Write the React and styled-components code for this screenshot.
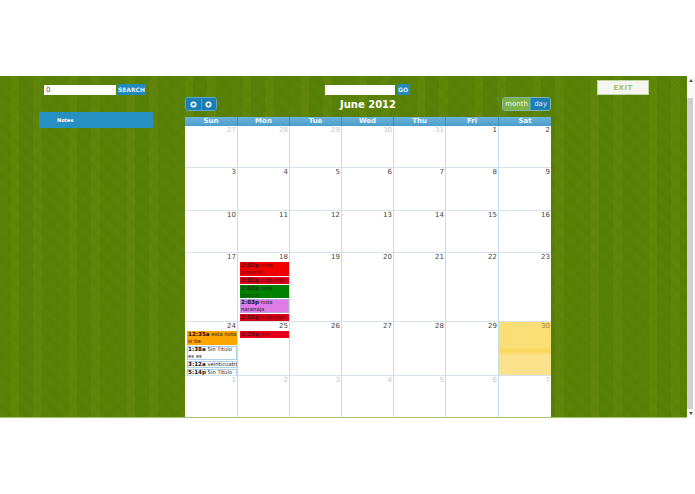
import React from 'react';
import styled, { createGlobalStyle } from 'styled-components';

const GlobalStyle = createGlobalStyle`
  html, body {
    margin: 0;
    padding: 0;
    background: #fff;
    overflow: hidden;
  }
  body {
    font-family: "DejaVu Sans", Verdana, sans-serif;
  }
`;

const Page = styled.div`
  width: 695px;
  height: 494px;
  padding-top: 76px;
  box-sizing: border-box;
`;

const Band = styled.div`
  height: 342px;
  display: flex;
  box-sizing: border-box;
  border-bottom: 1px solid #a3c76a;
  background-color: #598204;
  background-image:
    repeating-linear-gradient(45deg, rgba(255, 255, 255, 0.018) 0 1px, rgba(0, 0, 0, 0.018) 1px 2px),
    repeating-linear-gradient(-45deg, rgba(255, 255, 255, 0.012) 0 1px, rgba(0, 0, 0, 0.012) 1px 2px),
    repeating-linear-gradient(
      90deg,
      #588103 0 11px,
      #5e8605 11px 19px,
      #567f02 19px 33px,
      #5d8505 33px 42px,
      #578002 42px 58px
    );
`;

const Sidebar = styled.div`
  width: 185px;
  flex: none;
  box-sizing: border-box;
  padding: 8px 0 0 39px;
`;

const SearchRow = styled.div`
  display: flex;
  align-items: center;
  gap: ${(p) => p.$gap}px;
  margin-left: ${(p) => p.$indent || 0}px;
  padding-right: ${(p) => (p.$center ? 2 : 0)}px;
  justify-content: ${(p) => (p.$center ? 'center' : 'flex-start')};
  height: 11px;
`;

const TextBox = styled.input`
  width: ${(p) => p.$width}px;
  height: 10px;
  padding: 0 0 0 2px;
  box-sizing: border-box;
  border: 0;
  outline: 0;
  background: #fff;
  color: #555;
  font: 7px "DejaVu Sans", sans-serif;
`;

const BlueButton = styled.button`
  width: ${(p) => p.$width}px;
  height: 11px;
  padding: 0;
  border: 0;
  background: #2389bd;
  color: #dff1fa;
  font: bold 6px "DejaVu Sans", sans-serif;
`;

const MenuItem = styled.div`
  width: 114px;
  height: 16px;
  margin-top: 17px;
  padding-left: 18px;
  box-sizing: border-box;
  background: #2790c3;
  color: #fff;
  font-size: 5px;
  font-weight: bold;
  line-height: 16px;
`;

const Main = styled.div`
  width: 366px;
  flex: none;
  padding-top: 8px;
  display: flex;
  flex-direction: column;
`;

const Toolbar = styled.div`
  display: flex;
  align-items: center;
  height: 14px;
  margin-top: 2px;
`;

const ToolbarSide = styled.div`
  flex: 1;
  display: flex;
  justify-content: ${(p) => (p.$end ? 'flex-end' : 'flex-start')};
`;

const ButtonGroup = styled.div`
  display: flex;
  height: 14px;
  width: ${(p) => p.$width}px;
  box-sizing: border-box;
  border: 1px solid ${(p) => p.$edge || '#5aa7c9'};
  border-radius: 3px;
  overflow: hidden;
`;

const GroupButton = styled.div`
  flex: ${(p) => p.$grow || 1};
  display: flex;
  align-items: center;
  justify-content: center;
  background: ${(p) => (p.$light ? '#7eb148' : '#1b7fb5')};
  color: ${(p) => (p.$light ? '#eef6df' : '#e2f2fa')};
  font-size: 7px;
  & + & {
    border-left: 1px solid #4f9fc5;
  }
`;

const Title = styled.div`
  color: #fff;
  font-size: 10px;
  font-weight: bold;
`;

const Calendar = styled.div`
  margin-top: 6px;
  display: grid;
  grid-template-columns: 52px 52px 52px 52px 52px 53px 53px;
  grid-template-rows: 9px 42px 43px 42px 69px 54px 41px;
  background: #fff;
`;

const HeadCell = styled.div`
  background: linear-gradient(#6db3d9, #4a9ecb);
  color: #eaf6fc;
  font-size: 7px;
  font-weight: bold;
  line-height: 9px;
  text-align: center;
  &:not(:first-child) {
    border-left: 1px solid #3f8fbc;
  }
`;

const DayCell = styled.div`
  box-sizing: border-box;
  min-width: 0;
  overflow: hidden;
  border-left: ${(p) => (p.$first ? '0' : '1px solid #c5dcee')};
  border-bottom: ${(p) => (p.$bottom ? '0' : '1px solid #d5e3ee')};
  background: ${(p) =>
    p.$today
      ? 'linear-gradient(#f9df76 0 25px, #f8d95f 28px 30px, #fbe189 33px)'
      : '#fff'};
`;

const DayNumber = styled.div`
  height: 9px;
  padding-right: 1px;
  text-align: right;
  font-size: 7px;
  line-height: 9px;
  color: ${(p) => (p.$muted ? '#c3c6c9' : p.$today ? '#a3823a' : '#444')};
`;

const Event = styled.div`
  margin: 0 0 1px 2px;
  padding-left: 1px;
  box-sizing: border-box;
  height: ${(p) => p.$height}px;
  overflow: hidden;
  background: ${(p) => p.$color};
  box-shadow: ${(p) => (p.$outline ? `inset 0 0 0 1px ${p.$outline}` : 'none')};
  color: ${(p) => p.$text || '#222'};
  font-size: 5.3px;
  line-height: 7px;
  white-space: nowrap;
  b {
    font-size: 5.6px;
    color: ${(p) => p.$text || '#111'};
  }
`;

const EventLine = styled.div`
  height: ${(p) => p.$line || 7}px;
  line-height: ${(p) => p.$line || 7}px;
`;

const Right = styled.div`
  flex: 1;
  padding: 4px 0 0 46px;
`;

const ExitButton = styled.button`
  display: block;
  width: 52px;
  height: 15px;
  padding: 0;
  box-sizing: border-box;
  background: #f5f7ef;
  border: 1px solid #c3d5a0;
  color: #a0bf70;
  font: bold 7px "DejaVu Sans", sans-serif;
  letter-spacing: 0.4px;
`;

const Scrollbar = styled.div`
  width: 8px;
  flex: none;
  box-sizing: border-box;
  display: flex;
  flex-direction: column;
  background: #fafafa;
  margin-bottom: -1px;
`;

const ScrollArrow = styled.div`
  height: 9px;
  display: flex;
  align-items: center;
  justify-content: center;
`;

const ScrollThumb = styled.div`
  flex: 1;
  margin: 13px 2px 0 0;
  background: #cfcfd4;
`;

const Ring = () => (
  <svg width="7" height="7" viewBox="0 0 7 7">
    <circle cx="3.5" cy="3.5" r="2.2" fill="none" stroke="#fff" strokeWidth="1.6" />
  </svg>
);

const Tri = ({ down }) => (
  <svg width="4" height="3" viewBox="0 0 4 3">
    <path d={down ? 'M0 0h4L2 3z' : 'M0 3h4L2 0z'} fill="#555" />
  </svg>
);

const weeks = [
  [27, 28, 29, 30, 31, 1, 2],
  [3, 4, 5, 6, 7, 8, 9],
  [10, 11, 12, 13, 14, 15, 16],
  [17, 18, 19, 20, 21, 22, 23],
  [24, 25, 26, 27, 28, 29, 30],
  [1, 2, 3, 4, 5, 6, 7],
];

const events = {
  '3-1': [
    { time: '2:02p', text: 'nota', more: 'amarilla', color: '#f00000', height: 14, ink: '#5e0808' },
    { time: '2:02p', text: 'nota roja', color: '#d8001a', height: 7, ink: '#5e0808' },
    { time: '2:03p', text: 'nota', more: 'blanca', color: '#008000', height: 13, line: 6.5, ink: '#0c330c' },
    { time: '2:03p', text: 'nota', more: 'naranaja', color: '#e07ae6', outline: '#b8a8d8', height: 14 },
    { time: '2:03p', text: 'nota real', color: '#d60016', height: 7, ink: '#5e0808' },
  ],
  '4-0': [
    { time: '12:35a', text: 'esta nota', more: 'si tie', color: '#ffa500', height: 14 },
    { time: '1:38a', text: 'Sin Titulo', more: 'es es', color: '#fff', outline: '#a8d0e8', height: 14 },
    { time: '3:12a', text: 'veinticuatri', color: '#fff', outline: '#a8d0e8', height: 7 },
    { time: '5:14p', text: 'Sin Titulo', color: '#fff', outline: '#a8d0e8', height: 7 },
  ],
  '4-1': [{ time: '4:29p', text: 'fini', color: '#e8001a', height: 7, ink: '#5e0808' }],
};

const isMuted = (week, day) => (week === 0 && day < 5) || week === 5;

export default function App() {
  return (
    <Page>
      <GlobalStyle />
      <Band>
        <Sidebar>
          <SearchRow $gap={1} $indent={5}>
            <TextBox $width={72} defaultValue="0" />
            <BlueButton $width={29}>SEARCH</BlueButton>
          </SearchRow>
          <MenuItem>Notes</MenuItem>
        </Sidebar>

        <Main>
          <SearchRow $gap={2} $center>
            <TextBox $width={70} />
            <BlueButton $width={13}>GO</BlueButton>
          </SearchRow>
          <Toolbar>
            <ToolbarSide>
              <ButtonGroup $width={32}>
                <GroupButton><Ring /></GroupButton>
                <GroupButton><Ring /></GroupButton>
              </ButtonGroup>
            </ToolbarSide>
            <Title>June 2012</Title>
            <ToolbarSide $end>
              <ButtonGroup $width={49} $edge="#7fb6a8">
                <GroupButton $light $grow={29}>month</GroupButton>
                <GroupButton $grow={20}>day</GroupButton>
              </ButtonGroup>
            </ToolbarSide>
          </Toolbar>

          <Calendar>
            {['Sun', 'Mon', 'Tue', 'Wed', 'Thu', 'Fri', 'Sat'].map((d) => (
              <HeadCell key={d}>{d}</HeadCell>
            ))}
            {weeks.map((week, w) =>
              week.map((n, d) => {
                const today = w === 4 && d === 6;
                return (
                  <DayCell key={`${w}-${d}`} $first={d === 0} $bottom={w === 5} $today={today}>
                    <DayNumber $muted={isMuted(w, d)} $today={today}>{n}</DayNumber>
                    {(events[`${w}-${d}`] || []).map((e) => (
                      <Event
                        key={e.time + e.text + e.more}
                        $color={e.color}
                        $outline={e.outline}
                        $height={e.height}
                        $text={e.ink}
                      >
                        <EventLine $line={e.line}><b>{e.time}</b> {e.text}</EventLine>
                        {e.more && <EventLine $line={e.line}>{e.more}</EventLine>}
                      </Event>
                    ))}
                  </DayCell>
                );
              })
            )}
          </Calendar>
        </Main>

        <Right>
          <ExitButton>EXIT</ExitButton>
        </Right>

        <Scrollbar>
          <ScrollArrow><Tri /></ScrollArrow>
          <ScrollThumb />
          <ScrollArrow><Tri down /></ScrollArrow>
        </Scrollbar>
      </Band>
    </Page>
  );
}
